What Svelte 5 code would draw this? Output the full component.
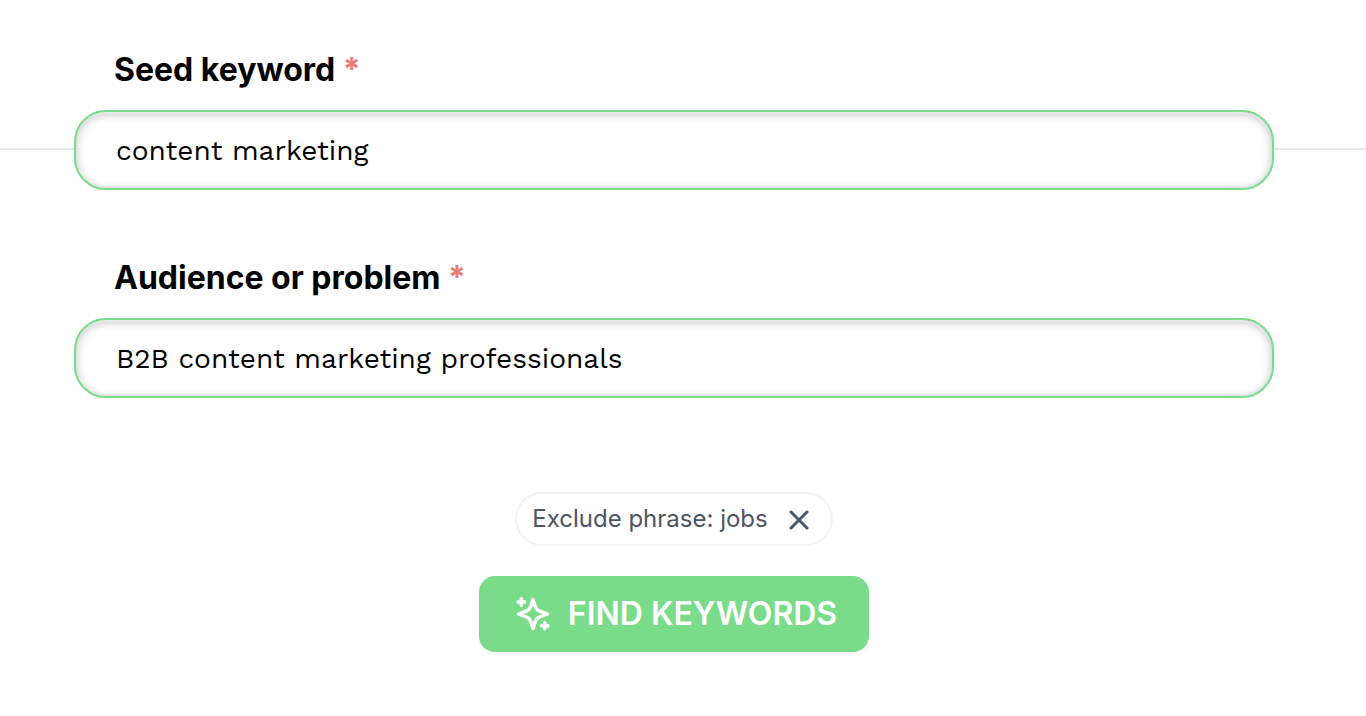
<script lang="ts">
    let keyword = $state("content marketing");
    let audience = $state("B2B content marketing professionals");
    let excluded = $state(["jobs"]);

    function removePhrase(phrase: string) {
        excluded = excluded.filter((p) => p !== phrase);
    }
</script>

<main>
    <form onsubmit={(e) => e.preventDefault()}>
        <div class="field first">
            <label for="keyword">Seed keyword <span class="required">*</span></label>
            <div class="control">
                <input id="keyword" type="text" bind:value={keyword} />
            </div>
        </div>

        <div class="field">
            <label for="audience">Audience or problem <span class="required">*</span></label>
            <div class="control">
                <input id="audience" type="text" bind:value={audience} />
            </div>
        </div>

        <div class="actions">
            {#each excluded as phrase}
                <div class="tag">
                    <span>Exclude phrase: {phrase}</span>
                    <button type="button" class="remove" aria-label="Remove phrase" onclick={() => removePhrase(phrase)}>
                        <svg viewBox="0 0 20 20" width="20" height="20">
                            <path d="M2 2 18 18M18 2 2 18" />
                        </svg>
                    </button>
                </div>
            {/each}

            <button type="submit" class="submit">
                <svg viewBox="0 0 36 36" width="36" height="36">
                    <path d="M18 3.500C19.500 8 20 10.500 21.500 12.800Q22.300 14 23.500 14.500C26 15.800 29 16.600 32.500 18C29 19.400 26 20.200 23.500 21.500Q22.300 22 21.500 23.200C20 25.500 19.500 28 18 32.500C16.500 28 16 25.500 14.500 23.200Q13.700 22 12.500 21.500C10 20.200 7 19.400 3.500 18C7 16.600 10 15.800 12.500 14.500Q13.700 14 14.500 12.800C16 10.500 16.500 8 18 3.500Z" />
                    <path d="M6.300 2.700V9.300M3 6H9.600M29.700 26.400V33M26.400 29.700H33" />
                </svg>
                FIND KEYWORDS
            </button>
        </div>
    </form>
</main>

<style>
    :global(body) {
        margin: 0;
        background: #fff;
    }

    main {
        font-family: Inter, "Liberation Sans", sans-serif;
    }

    .field {
        padding-top: 62px;
    }

    .field.first {
        padding-top: 44px;
    }

    /* line that runs behind the first input */
    .first .control {
        background: linear-gradient(#e5e7eb, #e5e7eb) 0 38px / 100% 2px no-repeat;
    }

    label {
        display: block;
        margin: 0 92px 14px 114px;
        font-size: 32px;
        line-height: 52px;
        font-weight: 700;
        color: #000;
    }

    .required {
        color: #ea7b73;
    }

    .control {
        padding: 0 92px 0 74px;
    }

    input {
        display: block;
        box-sizing: border-box;
        width: 100%;
        height: 80px;
        padding: 0 40px;
        border: 2px solid #7adc8b;
        border-radius: 32px;
        background: #fff;
        box-shadow: inset 0 2px 0 #e5e7eb, inset 0 -2px 0 #e5e7eb, inset 0 2px 10px rgba(0, 0, 0, 0.25);
        font-family: "Work Sans", Inter, sans-serif;
        font-size: 28px;
        color: #000;
        outline: none;
    }

    .actions {
        display: flex;
        flex-direction: column;
        align-items: center;
        gap: 30px;
        padding: 94px 92px 64px 74px;
    }

    .tag {
        display: flex;
        align-items: center;
        gap: 21px;
        box-sizing: border-box;
        height: 54px;
        padding: 2px 22px 0 15px;
        border: 2px solid #f3f4f6;
        border-radius: 27px;
        font-size: 24px;
        line-height: 30px;
        color: #4b5563;
    }

    .tag span {
        padding-bottom: 2px;
    }

    .remove {
        display: flex;
        padding: 0;
        border: 0;
        background: none;
        color: inherit;
        cursor: pointer;
    }

    svg {
        fill: none;
        stroke: currentColor;
        stroke-width: 3;
        stroke-linecap: round;
        stroke-linejoin: round;
    }

    .submit svg {
        stroke-width: 3.5;
    }

    .submit {
        display: flex;
        align-items: center;
        gap: 17px;
        height: 76px;
        padding: 0 32px 0 36px;
        border: 0;
        border-radius: 16px;
        background: #7adc8b;
        box-shadow: 0 2px 4px rgba(0, 0, 0, 0.05);
        color: #fff;
        font-family: inherit;
        font-size: 32px;
        line-height: 40px;
        font-weight: 600;
        cursor: pointer;
    }
</style>
